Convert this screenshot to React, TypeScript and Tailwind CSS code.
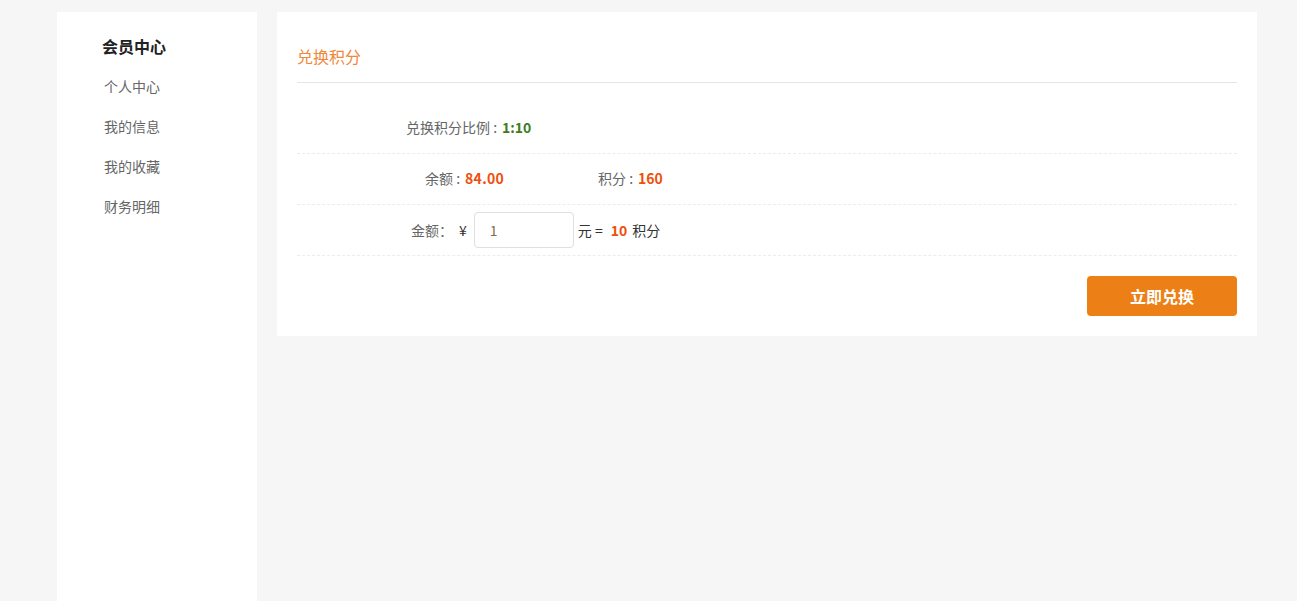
export default function App() {
  const font = { fontFamily: '"Microsoft YaHei", "Noto Sans CJK SC", "Noto Sans", sans-serif' };
  return (
    <div className="min-h-[601px] w-full bg-[#f6f6f6] pt-[12px]" style={font}>
      <div className="ml-[57px] flex items-start gap-[20px]">
        <aside className="flex min-h-[589px] w-[200px] flex-col bg-white pl-[45px] pt-[23px]">
          <div className="text-[16px] font-bold leading-[22px] text-[#222]">会员中心</div>
          <ul className="mt-[9px] pl-[2px] text-[14px] text-[#666]">
            <li className="leading-[40px]">个人中心</li>
            <li className="leading-[40px]">我的信息</li>
            <li className="leading-[40px]">我的收藏</li>
            <li className="leading-[40px]">财务明细</li>
          </ul>
        </aside>
        <main className="w-[980px] bg-white px-[20px] pb-[20px] pt-[32px]">
          <div className="border-b border-[#e5e5e5] pb-[14px] text-[16px] leading-[24px] text-[#f0883a]">兑换积分</div>
          <div className="mt-[20px] flex h-[51px] items-center border-b border-dashed border-[#ececec] pb-[2px] pl-[109px] text-[14px] text-[#666]">
            <span>兑换积分比例 :</span>
            <span className="ml-[5px] font-bold text-[#3f7d1f]">1:10</span>
          </div>
          <div className="flex h-[51px] items-center border-b border-dashed border-[#ececec] pb-[2px] text-[14px] text-[#666]">
            <div className="w-[301px] pl-[128px]">
              <span>余额 :</span>
              <span className="ml-[5px] font-bold tracking-[0.3px] text-[#ef4f0b]">84.00</span>
            </div>
            <div>
              <span>积分 :</span>
              <span className="ml-[5px] font-bold text-[#ef4f0b]">160</span>
            </div>
          </div>
          <div className="flex h-[51px] items-center border-b border-dashed border-[#ececec] pl-[114px] text-[14px] text-[#666]">
            <span>金额：</span>
            <span className="ml-[6px] text-[#333]">¥</span>
            <input
              defaultValue="1"
              className="ml-[7px] h-[36px] w-[100px] rounded-[4px] border border-[#dcdfe6] px-[15px] text-[14px] text-[#8a6a4a] outline-none"
            />
            <span className="ml-[4px] text-[#333]">元 =</span>
            <span className="ml-[8px] font-bold text-[#ef4f0b]">10</span>
            <span className="ml-[5px] text-[#333]">积分</span>
          </div>
          <div className="mt-[20px] flex justify-end">
            <button className="h-[40px] w-[150px] rounded-[4px] bg-[#ec8016] text-[16px] font-bold text-white">立即兑换</button>
          </div>
        </main>
      </div>
    </div>
  );
}
